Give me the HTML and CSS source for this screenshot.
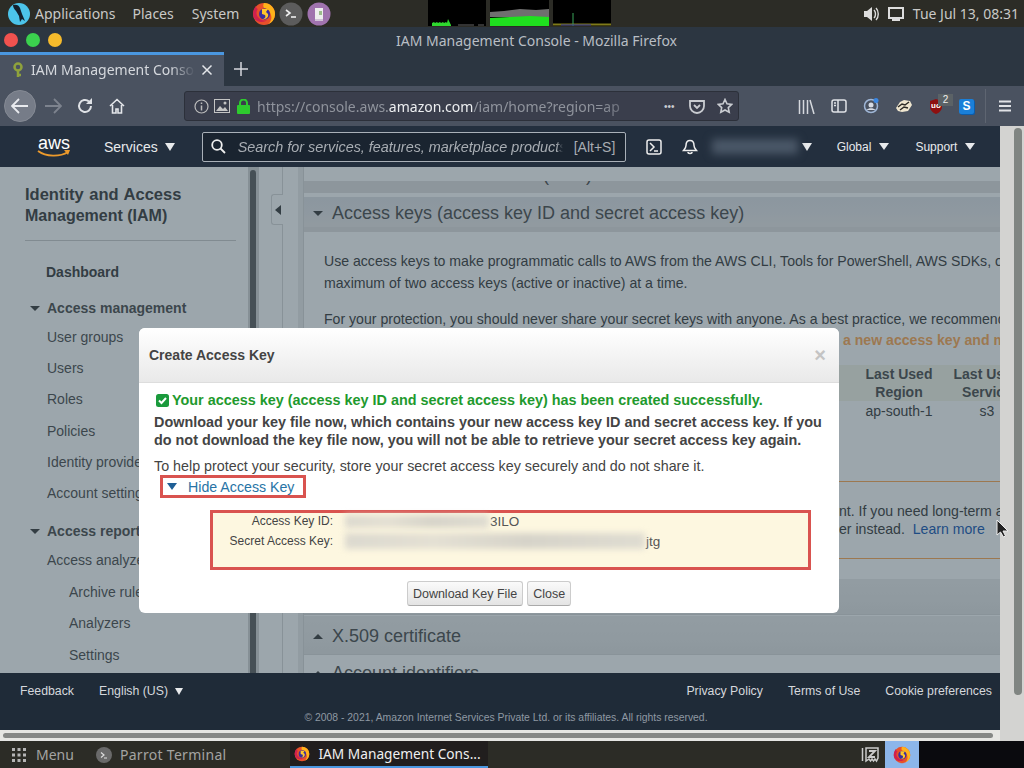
FILE: index.html
```html
<!DOCTYPE html>
<html lang="en">
<head>
<meta charset="utf-8">
<title>IAM Management Console - Mozilla Firefox</title>
<link rel="stylesheet" href="styles.css">
</head>
<body>
<svg class="defs" width="0" height="0" aria-hidden="true">
  <symbol id="fx" viewBox="0 0 24 24">
    <circle cx="12" cy="12" r="11" fill="#e8502a"/>
    <path d="M12 1a11 11 0 0 1 11 11c0 5-3 9-7 10 3-2 4-6 3-9-1-4-4-7-7-7-1-2-1-3 0-5z" fill="#ffb21a"/>
    <path d="M1 12c0-3 1-6 3-8 0 2 1 3 2 3-2 2-2 6 0 8 2 3 6 4 9 3-4 4-14 2-14-6z" fill="#d0214f"/>
    <circle cx="12.5" cy="12" r="5.5" fill="#3a2f9c"/>
    <path d="M10 7h6l-2 3 2 2c1 3-2 6-6 5 3 0 4-2 3-4l-3-1z" fill="#ffc629"/>
  </symbol>
</svg>

<header class="os-panel">
  <svg class="os-logo" width="24" height="24" viewBox="0 0 24 24"><circle cx="12" cy="12" r="11" fill="#4cc4ea"/><path d="M6 3c3-1 6 0 7 3l2 6 3 7-3-2-2 3-1-6-3-5C7 7 6 5 6 3z" fill="#14202c"/></svg>
  <span class="os-menu os-apps">Applications</span>
  <span class="os-menu os-places">Places</span>
  <span class="os-menu os-system">System</span>
  <svg class="os-ic os-fx" width="24" height="24"><use href="#fx"/></svg>
  <svg class="os-ic os-termic" width="24" height="24" viewBox="0 0 24 24"><circle cx="12" cy="12" r="11.5" fill="#5c5c5c"/><path d="M7 8l4 3-4 3" fill="none" stroke="#eee" stroke-width="1.6"/><path d="M12 15h5" stroke="#eee" stroke-width="1.6"/></svg>
  <svg class="os-ic" width="24" height="24" viewBox="0 0 24 24"><circle cx="12" cy="12" r="11.5" fill="#a073ae"/><path d="M8 6h8v11H8z" fill="#eee"/><path d="M8 17h8v2H8z" fill="#cfc2d6"/><path d="M12 9h3v4h-3z" fill="#9cbc8c"/></svg>
  <div class="monitors">
    <svg class="mon" width="58" height="26"><rect width="58" height="26"/><path d="M4 26v-3l2-1 1 1 2-1 1 1 2-1 1 1 2-1 1 1 2-1 1 1 1-4 3 6v1z" fill="#2ed82e"/><path d="M30 25h16M50 25h6" stroke="#666"/></svg>
    <svg class="mon" width="59" height="26"><rect width="59" height="26"/><path d="M0 12l14-1 16-2 16 1 13-1v8H0z" fill="#6f6f6f"/><path d="M0 18l20-1 20-1 19 1v9H0z" fill="#1fe01f"/></svg>
    <svg class="mon" width="58" height="26"><rect width="58" height="26"/><path d="M0 24.500h58" stroke="#7f7a1a" stroke-width="2"/><path d="M20 26V13" stroke="#3aa55a"/><path d="M8 25h30" stroke="#2c2ca0"/></svg>
  </div>
  <svg class="os-speaker" width="16" height="16" viewBox="0 0 16 16"><path d="M1 5h3l5-4v14l-5-4H1z" fill="#ddd"/><path d="M11 4c2 2 2 6 0 8M13 2c3 3 3 9 0 12" fill="none" stroke="#ddd" stroke-width="1.400"/></svg>
  <svg class="os-screen" width="16" height="14" viewBox="0 0 16 14"><path d="M1 1h14v10H1z" fill="none" stroke="#ddd" stroke-width="2"/><path d="M4 13h8" stroke="#ddd" stroke-width="2"/></svg>
  <span class="os-clock">Tue Jul 13, 08:31</span>
</header>

<div class="ff-title">
  <div class="traffic"><i class="dot red"></i><i class="dot green"></i><i class="dot yellow"></i></div>
  <span class="ff-title-text">IAM Management Console - Mozilla Firefox</span>
</div>

<div class="ff-tabs">
  <div class="tab">
    <svg class="tab-key" width="10" height="16" viewBox="0 0 10 16"><circle cx="5" cy="5" r="3.500" fill="none" stroke="#8fa23c" stroke-width="2.500"/><path d="M5 8v7M5 13h3" stroke="#8fa23c" stroke-width="2.500"/></svg>
    <span class="tab-text">IAM Management Console</span>
    <svg class="tab-x" width="12" height="12" viewBox="0 0 12 12"><path d="M1.500 1.500l9 9M10.500 1.500l-9 9" stroke="#e4e6ea" stroke-width="1.500"/></svg>
  </div>
  <svg class="tab-new" width="14" height="14" viewBox="0 0 14 14"><path d="M7 0v14M0 7h14" stroke="#d5d8dd" stroke-width="1.500"/></svg>
</div>

<nav class="ff-nav">
  <span class="back"><svg width="18" height="16" viewBox="0 0 18 16"><path d="M8 1L1 8l7 7M1 8h16" fill="none" stroke="#e8eaee" stroke-width="1.800"/></svg></span>
  <svg class="nav-fwd" width="18" height="16" viewBox="0 0 18 16"><path d="M10 1l7 7-7 7M17 8H1" fill="none" stroke="#7d838e" stroke-width="1.800"/></svg>
  <svg class="nav-reload" width="16" height="16" viewBox="0 0 16 16"><path d="M14 8a6 6 0 1 1-2-4.500" fill="none" stroke="#dfe2e6" stroke-width="2"/><path d="M15 0v6H9z" fill="#dfe2e6"/></svg>
  <svg class="nav-home" width="16" height="16" viewBox="0 0 16 16"><path d="M1 8l7-6.500L15 8M3.500 7v8h3.500v-4h2v4h3.500V7" fill="none" stroke="#e4e6ea" stroke-width="1.600"/></svg>
  <div class="urlbar">
    <svg class="url-info" width="15" height="15" viewBox="0 0 15 15"><circle cx="7.500" cy="7.500" r="6.500" fill="none" stroke="#bbb" stroke-width="1.200"/><path d="M7.500 6.500v5M7.500 3.500v1.500" stroke="#bbb" stroke-width="1.500"/></svg>
    <svg class="url-img" width="16" height="14" viewBox="0 0 16 14"><rect x="0.500" y="0.500" width="15" height="13" fill="none" stroke="#c4c4c4"/><path d="M2 12l4-5 3 3 2-2 3 4z" fill="#c4c4c4"/><circle cx="11" cy="4" r="1.500" fill="#c4c4c4"/></svg>
    <svg class="url-lock" width="13" height="15" viewBox="0 0 13 15"><rect y="6" width="13" height="9" rx="1" fill="#2ecb2e"/><path d="M3 6V4a3.500 3.500 0 0 1 7 0v2" fill="none" stroke="#2ecb2e" stroke-width="2"/></svg>
    <span class="url-text">https://console.aws.<b class="url-host">amazon.com</b>/iam/home?region=ap</span>
    <span class="url-dots">•••</span>
    <svg class="url-pocket" width="16" height="15" viewBox="0 0 16 15"><path d="M1 2h14v5a7 7 0 0 1-14 0z" fill="none" stroke="#c9ccd1" stroke-width="1.800"/><path d="M5 6l3 3 3-3" fill="none" stroke="#c9ccd1" stroke-width="1.800"/></svg>
    <svg class="url-star" width="16" height="16" viewBox="0 0 16 16"><path d="M8 1.500l2 4.300 4.700.6-3.400 3.200.9 4.700L8 12l-4.200 2.300.9-4.700L1.300 6.400 6 5.800z" fill="none" stroke="#c9ccd1" stroke-width="1.600"/></svg>
  </div>
  <div class="nav-tools">
    <svg width="17" height="15" viewBox="0 0 17 15"><path d="M1.500 1v14M5.500 1v14M9.500 1v14M12 1l4 14" stroke="#d5d8dd" stroke-width="1.500"/></svg>
    <svg width="16" height="14" viewBox="0 0 16 14"><rect x="1" y="1" width="14" height="12" rx="2" fill="none" stroke="#e0e2e6" stroke-width="1.500"/><path d="M7 1v12M3 4h2M3 6.500h2" stroke="#e0e2e6" stroke-width="1.500"/></svg>
    <svg width="16" height="16" viewBox="0 0 16 16"><circle cx="8" cy="8" r="6.500" fill="none" stroke="#9fb6d6" stroke-width="1.500"/><circle cx="8" cy="7" r="2.500" fill="#d6dbe4"/><path d="M3.500 12c2-2.500 7-2.500 9 0" fill="#d6dbe4"/><circle cx="13" cy="2.500" r="2.500" fill="#3a86e0"/></svg>
    <svg width="18" height="14" viewBox="0 0 18 14"><path d="M1 9l4-6 4-2 6 1 2 4-4 6-6 1-4-1z" fill="#efe6cf"/><path d="M3 8l4-3 3 1 4-3M5 11l4-3 4 1" fill="none" stroke="#2c2a26" stroke-width="1.500"/></svg>
    <span class="ublock"><svg width="14" height="15" viewBox="0 0 14 15"><path d="M7 0l6 2v6c0 3-3 6-6 7-3-1-6-4-6-7V2z" fill="#8e1010"/></svg><b class="ublock-uo">uo</b><i class="ublock-badge">2</i></span>
    <span class="skype">S</span>
  </div>
  <svg class="nav-menu" width="14" height="12" viewBox="0 0 14 12"><path d="M1 1.500h12M1 6h12M1 10.500h12" stroke="#e0e2e6" stroke-width="1.800"/></svg>
</nav>

<div class="browser">
  <div class="page">
    <header class="aws-head">
      <div class="aws-logo"><span class="aws-word">aws</span><svg width="34" height="8" viewBox="0 0 34 8"><path d="M1 1c8 6 22 6 30 1" fill="none" stroke="#ec9a2c" stroke-width="1.800"/><path d="M27 0l6 0-2 5z" fill="#ec9a2c"/></svg></div>
      <span class="aws-services">Services <i class="caret caret-lg"></i></span>
      <div class="aws-search">
        <svg width="15" height="15" viewBox="0 0 15 15"><circle cx="6" cy="6" r="4.800" fill="none" stroke="#eee" stroke-width="1.800"/><path d="M9.500 9.500l4.500 4.500" stroke="#eee" stroke-width="1.800"/></svg>
        <span class="aws-placeholder">Search for services, features, marketplace products</span>
        <span class="aws-shortcut">[Alt+S]</span>
      </div>
      <svg class="aws-cli" width="16" height="16" viewBox="0 0 16 16"><rect x="1" y="1" width="14" height="14" rx="2" fill="none" stroke="#eee" stroke-width="1.500"/><path d="M4 4l4 4-4 4M8 12h4" fill="none" stroke="#eee" stroke-width="1.500"/></svg>
      <svg class="aws-bell" width="16" height="16" viewBox="0 0 16 16"><path d="M8 1.500c-3 0-4 2.500-4 5 0 2-1 3-2.500 5h13C13 9.500 12 8.500 12 6.500c0-2.500-1-5-4-5z" fill="none" stroke="#eee" stroke-width="1.500"/><path d="M6 13c0 2 4 2 4 0" fill="none" stroke="#eee" stroke-width="1.500"/></svg>
      <span class="aws-account"></span>
      <i class="caret caret-lg aws-account-caret"></i>
      <span class="aws-small aws-global">Global <i class="caret"></i></span>
      <span class="aws-small aws-support">Support <i class="caret"></i></span>
    </header>

    <main class="main">
      <aside class="sidebar">
        <h2 class="side-title"><span class="side-title-1">Identity and Access</span> Management (IAM)</h2>
        <a class="side-dash">Dashboard</a>
        <h3 class="side-group"><i class="tri"></i>Access management</h3>
        <a class="side-item side-first">User groups</a>
        <a class="side-item">Users</a>
        <a class="side-item">Roles</a>
        <a class="side-item">Policies</a>
        <a class="side-item">Identity providers</a>
        <a class="side-item">Account settings</a>
        <h3 class="side-group side-group2"><i class="tri"></i>Access reports</h3>
        <a class="side-item side-first2">Access analyzer</a>
        <a class="side-item side-sub">Archive rules</a>
        <a class="side-item side-sub">Analyzers</a>
        <a class="side-item side-sub">Settings</a>
      </aside>
      <div class="side-track"><i class="side-thumb"></i></div>
      <div class="gutter"><span class="collapse"><i class="tri-left"></i></span></div>
      <section class="content">
        <div class="strip-top"><span class="strip-text">Multi-factor authentication (MFA)</span></div>
        <div class="acc-head acc-keys"><i class="tri"></i><span>Access keys (access key ID and secret access key)</span></div>
        <div class="acc-body">
          <p class="para para-1">Use access keys to make programmatic calls to AWS from the AWS CLI, Tools for PowerShell, AWS SDKs, or direct AWS API calls. You can have a<br>maximum of two access keys (active or inactive) at a time.</p>
          <p class="para para-2">For your protection, you should never share your secret keys with anyone. As a best practice, we recommend frequent key rotation.</p>
          <p class="para para-3"><b class="orange">a new access key and make sure to delete it</b></p>
          <div class="keys-table">
            <div class="th th-region">Last Used<br>Region</div>
            <div class="th th-service">Last Used<br>Service</div>
            <div class="td td-region">ap-south-1</div>
            <div class="td td-service">s3</div>
          </div>
          <div class="warn">
            <p class="warn-line"><span class="warn-a">nt. If you need long-term access</span><br><span class="warn-b">er instead.</span> <a class="warn-link">Learn more</a></p>
          </div>
        </div>
        <div class="acc-head acc-cf"><i class="tri tri-up"></i><span>CloudFront key pairs</span></div>
        <div class="acc-head acc-x509"><i class="tri tri-up"></i><span>X.509 certificate</span></div>
        <div class="acc-head acc-ids"><i class="tri tri-up"></i><span>Account identifiers</span></div>
      </section>

      <div class="backdrop"></div>

      <div class="modal">
        <div class="modal-head"><h4 class="modal-title">Create Access Key</h4><span class="modal-x">×</span></div>
        <div class="modal-body">
          <p class="ok"><svg width="13" height="13" viewBox="0 0 13 13"><rect width="13" height="13" rx="2.500" fill="#1a9a3c"/><path d="M3 6.500l2.500 2.500L10 4" fill="none" stroke="#fff" stroke-width="2"/></svg>Your access key (access key ID and secret access key) has been created successfully.</p>
          <p class="warnbold">Download your key file now, which contains your new access key ID and secret access key. If you do not download the key file now, you will not be able to retrieve your secret access key again.</p>
          <p class="protect">To help protect your security, store your secret access key securely and do not share it.</p>
          <div class="toggle"><i class="toggle-tri"></i><a class="toggle-link">Hide Access Key</a></div>
          <div class="keybox">
            <div class="keyrow"><span class="keylabel">Access Key ID:</span><span class="blur blur-id"></span><span class="keyval">3ILO</span></div>
            <div class="keyrow keyrow2"><span class="keylabel">Secret Access Key:</span><span class="blur blur-secret"></span><span class="keyval">jtg</span></div>
          </div>
          <div class="modal-actions"><button class="btn">Download Key File</button><button class="btn">Close</button></div>
        </div>
      </div>
    </main>

    <footer class="aws-foot">
      <div class="foot-row">
        <a class="foot-link">Feedback</a>
        <a class="foot-link">English (US) <i class="caret foot-caret"></i></a>
        <span class="foot-gap"></span>
        <a class="foot-link">Privacy Policy</a>
        <a class="foot-link">Terms of Use</a>
        <a class="foot-link">Cookie preferences</a>
      </div>
      <div class="foot-copy">© 2008 - 2021, Amazon Internet Services Private Ltd. or its affiliates. All rights reserved.</div>
    </footer>
    <div class="hscroll"><i class="hthumb"></i></div>
  </div>
  <div class="vscroll"><i class="vthumb"></i></div>
  <svg class="cursor" width="13" height="20" viewBox="0 0 13 20"><path d="M1 1l0 15 3.500-3 3 5 2-1-2.500-5H12z" fill="#222" stroke="#eee"/></svg>
</div>

<footer class="os-bottom">
  <svg class="os-grid" width="16" height="16" viewBox="0 0 16 16"><path d="M1 1h3v3H1zM6.500 1h3v3h-3zM12 1h3v3h-3zM1 6.500h3v3H1zM6.500 6.500h3v3h-3zM12 6.500h3v3h-3zM1 12h3v3H1zM6.500 12h3v3h-3zM12 12h3v3h-3z" fill="#b5b5b5"/></svg>
  <span class="os-task-menu">Menu</span>
  <svg class="os-term" width="16" height="16" viewBox="0 0 16 16"><circle cx="8" cy="8" r="8" fill="#6a6a6a"/><path d="M5 5.500l3 2.500-3 2.500M8 11h3" fill="none" stroke="#ddd" stroke-width="1.200"/></svg>
  <span class="os-task-term">Parrot Terminal</span>
  <div class="os-active"><svg width="16" height="16"><use href="#fx"/></svg><span class="os-active-text">IAM Management Cons...</span></div>
  <svg class="os-sleep" width="18" height="16" viewBox="0 0 18 16"><path d="M1.500 1v13M5 1h12v10l-1.500 3-1.500-2-1.500 2-1.500-2-1.500 2-1.500-2L5 14z" fill="none" stroke="#ccc" stroke-width="1.500"/><path d="M8 4h6l-6 6h6" fill="none" stroke="#ccc" stroke-width="1.800"/></svg>
  <div class="os-fxtile"><svg width="18" height="18"><use href="#fx"/></svg></div>
  <div class="os-black"></div>
</footer>
</body>
</html>
```
FILE: styles.css
```css
* { box-sizing: border-box; }
html, body { margin: 0; padding: 0; }
body {
  width: 1024px; height: 768px; overflow: hidden;
  display: flex; flex-direction: column;
  font-family: "Liberation Sans", Arial, sans-serif;
  background: #2b2b26;
}
.defs { position: absolute; }
i { display: block; font-style: normal; }
a { text-decoration: none; }

/* top OS panel */
.os-panel {
  height: 27px; flex: none; display: flex; align-items: center;
  background: #2c2c26; font-family: "Noto Sans", sans-serif; font-size: 14px; color: #c9c9c7;
}
.os-logo { margin-left: 7px; }
.os-menu { line-height: 27px; }
.os-apps { margin-left: 4px; }
.os-places { margin-left: 17px; }
.os-system { margin-left: 18px; }
.os-ic { margin-left: 4px; }
.os-fx { margin-left: 13px; }
.os-termic { margin-left: 3px; }
.monitors { display: flex; gap: 4px; margin-left: 97px; align-self: flex-start; }
.mon { display: block; fill: #000; }
.mon path { stroke-linecap: butt; }
.os-speaker { margin-left: auto; }
.os-screen { margin-left: 9px; }
.os-clock { margin-left: 9px; margin-right: 5px; font-size: 14px; }

/* firefox chrome */
.ff-title {
  height: 25px; flex: none; position: relative; display: flex; align-items: center; justify-content: center;
  background: #2c3641; color: #b9bec4; font-family: "Noto Sans", sans-serif; font-size: 14px;
  padding: 2px 0 0 49px;
}
.traffic { position: absolute; left: 4px; top: 6px; display: flex; gap: 8px; }
.dot { width: 14px; height: 14px; border-radius: 50%; }
.red { background: #f0524f; }
.green { background: #3bd14e; }
.yellow { background: #f6bb2c; }
.ff-tabs { height: 34px; flex: none; display: flex; align-items: center; background: #2c3641; }
.tab {
  width: 224px; height: 34px; display: flex; align-items: center; padding: 0 0 2px 13px;
  background: #4a5260; border-top: 3px solid #4a97e0; color: #d5d8dd;
  font-family: "Noto Sans", sans-serif; font-size: 14px;
}
.tab-text {
  width: 164px; margin-left: 8px; white-space: nowrap; overflow: hidden;
  -webkit-mask-image: linear-gradient(90deg, #000 85%, transparent);
  mask-image: linear-gradient(90deg, #000 85%, transparent);
}
.tab-x { margin-left: 6px; }
.tab-new { margin-left: 10px; }
.ff-nav { height: 40px; flex: none; display: flex; align-items: center; background: #4a5260; position: relative; }
.back {
  width: 32px; height: 32px; margin-left: 4px; border-radius: 50%; background: #767c88;
  display: flex; align-items: center; justify-content: center; border: 1px solid #858a94;
}
.nav-fwd { margin-left: 8px; }
.nav-reload { margin-left: 15px; }
.nav-home { margin-left: 16px; }
.urlbar {
  width: 555px; height: 30px; margin-left: 59px; display: flex; align-items: center;
  background: #3a3e4c; border: 1px solid #2c303a; border-radius: 3px; padding-left: 9px;
}
.url-img { margin-left: 5px; }
.url-lock { margin-left: 7px; }
.url-text {
  width: 390px; margin-left: 7px; font-family: "Noto Sans", sans-serif; font-size: 14px; color: #8f939c; white-space: nowrap; overflow: hidden;
  -webkit-mask-image: linear-gradient(90deg, #000 88%, transparent);
  mask-image: linear-gradient(90deg, #000 88%, transparent);
}
.url-host { font-weight: 400; color: #eceef0; }
.url-dots { margin-left: 17px; font-size: 10px; color: #c9ccd1; letter-spacing: 0; }
.url-pocket { margin-left: 14px; }
.url-star { margin-left: 12px; }
.nav-tools { display: flex; align-items: center; gap: 16px; margin-left: 59px; }
.ublock { position: relative; width: 15px; height: 15px; display: block; }
.ublock svg { display: block; }
.ublock-uo { position: absolute; left: 2px; top: 2px; font-size: 8px; font-weight: 700; color: #fff; }
.ublock-badge { position: absolute; left: 9px; top: -5px; width: 15px; height: 12px; background: #5b6266; color: #eee; font-size: 10px; text-align: center; line-height: 12px; }
.skype { width: 15px; height: 15px; margin-left: -1px; background: #1a7fd8; color: #fff; font-size: 12px; font-weight: 700; text-align: center; line-height: 15px; border-radius: 2px; box-shadow: 1px 1px 0 #0d5ba8; }
.nav-menu { margin-left: 12px; }
.nav-tools::after { content: ""; width: 1px; height: 34px; background: #5e6571; margin-left: -5px; }

/* browser viewport */
.browser { height: 615px; flex: none; display: flex; position: relative; }
.page { width: 1000px; display: flex; flex-direction: column; }
.vscroll { width: 24px; background: #d3d3d1; padding: 2px 2px 0 14px; }
.vthumb { width: 8px; height: 567px; background: #808582; border-radius: 4px; }
.hscroll { height: 11px; flex: none; background: #e6e6e3; padding: 3px 7px 3px 3px; }
.hthumb { height: 5px; background: #868886; border-radius: 3px; }
.cursor { position: absolute; left: 996px; top: 393px; }

/* aws header */
.aws-head {
  height: 41px; flex: none; background: #232f3e; display: flex; align-items: center;
  color: #e8eaec; font-size: 14px;
}
.aws-logo { width: 34px; margin-left: 37px; display: flex; flex-direction: column; align-items: center; }
.aws-word { font-size: 18px; line-height: 15px; color: #fff; font-family: "Liberation Sans", sans-serif; }
.aws-logo svg { display: block; margin-top: -1px; }
.aws-services { margin-left: 33px; display: flex; align-items: center; gap: 7px; }
.caret { width: 0; height: 0; display: inline-block; border-left: 5px solid transparent; border-right: 5px solid transparent; border-top: 7px solid #e8eaec; vertical-align: 0; }
.caret-lg { border-left-width: 5.500px; border-right-width: 5.500px; border-top-width: 8px; }
.aws-search {
  width: 424px; height: 30px; margin-left: 27px; display: flex; align-items: center;
  border: 1px solid #a9b0b8; border-radius: 2px; background: #1a2430; padding-left: 8px;
}
.aws-placeholder {
  width: 325px; margin-left: 12px; font-size: 14.4px; font-style: italic; color: #a8adb3; white-space: nowrap; overflow: hidden;
  -webkit-mask-image: linear-gradient(90deg, #000 98%, transparent);
  mask-image: linear-gradient(90deg, #000 98%, transparent);
}
.aws-shortcut { margin-left: 11px; color: #a8adb3; }
.aws-cli { margin-left: 20px; }
.aws-bell { margin-left: 20px; }
.aws-account { width: 86px; height: 15px; margin-left: 14px; background: #4b5868; filter: blur(4px); }
.aws-account-caret { margin-left: 4px; }
.aws-small { font-size: 12px; display: flex; align-items: center; gap: 8px; }
.aws-global { margin-left: 25px; }
.aws-support { margin-left: 26px; }

/* main */
.main { height: 506px; flex: none; position: relative; display: flex; overflow: hidden; background: #fff; }
.sidebar { width: 248px; flex: none; padding: 17px 12px 0 25px; color: #444; font-size: 14px; overflow: hidden; white-space: nowrap; }
.side-title { margin: 0; width: 211px; white-space: normal; font-size: 16px; line-height: 21px; font-weight: 700; color: #444; border-bottom: 1px solid #cfcfcf; padding-bottom: 14px; }
.side-title-1 { font-size: 16.500px; word-spacing: 1px; }
.side-dash { display: block; margin: 22px 0 0 21px; font-weight: 700; line-height: 18px; }
.side-group { margin: 18px 0 0 5px; font-size: 14px; font-weight: 700; line-height: 18px; color: #555; display: flex; align-items: center; gap: 7px; }
.side-group2 { margin-top: 13px; }
.side-item { display: block; margin-left: 22px; height: 31.200px; line-height: 31px; color: #555; }
.side-first { margin-top: 5px; }
.side-first2 { margin-top: 5px; height: 32px; }
.side-sub { margin-left: 44px; }
.tri { width: 0; height: 0; border-left: 5px solid transparent; border-right: 5px solid transparent; border-top: 5px solid #444; flex: none; }
.tri-up { border-top: 0; border-bottom: 5px solid #444; }
.side-track { width: 11px; flex: none; background: #d8d8d8; padding: 3px 2px 0; }
.side-thumb { width: 6px; height: 540px; background: #666; border-radius: 3px; }
.gutter { width: 44px; flex: none; position: relative; }
.gutter::before { content: ""; position: absolute; left: 23px; top: 0; bottom: 0; width: 1px; background: #dcdcdc; }
.gutter::after { content: ""; position: absolute; right: 0; top: 0; bottom: 0; width: 5px; background: #eee; }
.collapse { position: absolute; left: 12px; top: 27px; width: 12px; height: 31px; background: #fff; border: 1px solid #dcdcdc; border-right: 0; border-radius: 3px 0 0 3px; display: flex; align-items: center; justify-content: center; }
.tri-left { width: 0; height: 0; border-top: 5px solid transparent; border-bottom: 5px solid transparent; border-right: 6px solid #444; }
.content { width: 697px; flex: none; overflow: hidden; border-left: 1px solid #dcdcdc; color: #444; font-size: 14.100px; white-space: nowrap; }
.strip-top { height: 12px; margin-top: 14px; background: #e4e2e2; overflow: hidden; padding-left: 28px; }
.strip-text { display: block; font-size: 18px; line-height: 18px; margin-top: -15px; color: #555; }
.acc-head { display: flex; align-items: center; gap: 8px; padding-left: 9px; font-size: 18px; color: #555; background: linear-gradient(#eeeeee, #e6e6e6); border-bottom: 1px solid #ddd; }
.acc-head span { margin-left: 1px; }
.acc-keys { height: 35px; margin-top: 4px; border-bottom: 5px solid #e4e2e2; background: linear-gradient(#e2e4e8, #eceaea); padding-top: 2px; }
.acc-body { height: 347px; padding-left: 20px; position: relative; }
.para { margin: 0; line-height: 22px; }
.para-1 { padding-top: 18px; }
.para-2 { margin-top: 14px; }
.para-3 { margin-top: -1px; padding-left: 519px; }
.orange { color: #ffae5c; }
.keys-table { display: grid; grid-template-columns: 70px 90px; grid-template-rows: 36px 26px; column-gap: 8px; margin-left: -20px; padding-left: 560px; margin-top: 14px; font-size: 14px; background: linear-gradient(#f6f7ea, #f6f7ea) 0 0 / 100% 36px no-repeat; }
.th { font-weight: 700; text-align: center; line-height: 18px; color: #555; }
.td { text-align: center; line-height: 20px; padding-top: 0; }
.warn { margin: 54px 0 0 -20px; height: 78px; border-top: 1px solid #ffae5c; border-bottom: 1px solid #ffae5c; }
.warn-line { margin: 0; padding: 20px 0 0 535px; line-height: 18px; }
.warn-link { color: #1f5fb8; margin-left: 4px; }
.acc-cf { height: 36px; margin-top: 0; }
.acc-x509 { height: 39px; margin-top: 1px; padding-top: 2px; }
.acc-ids { height: 36px; margin-top: 0; background: #fff; border: 0; }

/* backdrop + modal */
.backdrop { position: absolute; inset: 0; background: rgba(30, 52, 65, .44); }
.modal {
  position: absolute; left: 139px; top: 161px; width: 700px; height: 285px;
  background: #fff; border-radius: 6px; overflow: hidden; color: #444;
  font-size: 14px;
}
.modal-head { height: 55px; display: flex; align-items: center; justify-content: space-between; padding: 0 13px 0 10px; background: linear-gradient(#fff, #e9e9e9); border-bottom: 1px solid #ddd; }
.modal-title { margin: 0; font-size: 14px; font-weight: 700; color: #444; }
.modal-x { font-size: 20px; font-weight: 700; color: #c4c4c4; line-height: 20px; }
.modal-body { padding: 8px 15px 0; }
.ok { margin: 0; display: flex; align-items: center; gap: 3px; padding-left: 2px; font-size: 14.400px; font-weight: 700; color: #1f9a2e; line-height: 18px; white-space: nowrap; }
.warnbold { margin: 4px 0 0; font-size: 14.400px; font-weight: 700; line-height: 18px; width: 670px; }
.protect { margin: 8px 0 0; font-size: 14.300px; line-height: 18px; }
.toggle { margin: 0 0 0 6px; width: 146px; height: 23px; border: 3px solid #d9534f; display: flex; align-items: center; padding-left: 4px; }
.toggle-tri { width: 0; height: 0; border-left: 5.500px solid transparent; border-right: 5.500px solid transparent; border-top: 7px solid #1f5f96; }
.toggle-link { margin-left: 11px; font-size: 14.200px; color: #2874a6; }
.keybox { margin: 12px 0 0 56px; width: 601px; height: 60px; border: 3px solid #d9534f; background: #fdf7e0; }
.keyrow { display: flex; align-items: center; height: 18px; margin-top: -1px; }
.keyrow2 { margin-top: 2px; }
.keylabel { width: 120px; text-align: right; font-size: 12px; line-height: 18px; }
.blur { margin-left: 12px; height: 13px; background: linear-gradient(90deg, #dcd9cf, #e4e0d3 30%, #d6d3c9 60%, #dfdcd1); filter: blur(3px); }
.blur-id { width: 144px; }
.blur-secret { width: 300px; height: 16px; }
.keyval { font-size: 13.500px; color: #555; margin-left: 1px; }
.modal-actions { margin-top: 11px; display: flex; justify-content: center; gap: 4px; }
.btn { height: 25px; padding: 0 5px; font: 12.500px "Liberation Sans", sans-serif; color: #444; background: linear-gradient(#fafafa, #e4e4e4); border: 1px solid #ccc; border-bottom-color: #aaa; border-radius: 3px; }

/* aws footer */
.aws-foot { height: 57px; flex: none; background: #1f2b38; color: #d5d8dc; font-size: 12.300px; }
.foot-row { display: flex; gap: 25px; padding: 11px 8px 0 20px; line-height: 14px; }
.foot-link { display: flex; align-items: center; gap: 7px; }
.foot-gap { flex: 1; }
.foot-caret { border-left-width: 4.500px; border-right-width: 4.500px; }
.foot-copy { margin-top: 13px; text-align: center; font-size: 10.400px; color: #8f99a3; padding-left: 12px; line-height: 14px; }

/* bottom OS panel */
.os-bottom { height: 27px; flex: none; display: flex; align-items: center; background: #2c2c26; font-family: "Noto Sans", sans-serif; font-size: 14px; color: #a4a4a2; }
.os-grid { margin-left: 11px; }
.os-task-menu { margin-left: 9px; }
.os-term { margin-left: 22px; }
.os-task-term { margin-left: 8px; letter-spacing: .3px; }
.os-active { width: 198px; height: 27px; margin-left: 64px; display: flex; align-items: center; gap: 8px; padding-left: 4px; background: #211e1e; border-bottom: 2px solid #4a97e0; color: #f0f0f0; font-size: 13.700px; }
.os-sleep { margin-left: 373px; }
.os-fxtile { width: 34px; height: 27px; margin-left: 6px; background: #8cb6ea; display: flex; align-items: center; justify-content: center; }
.os-black { flex: 1; height: 27px; background: #0a0a0e; }
```
